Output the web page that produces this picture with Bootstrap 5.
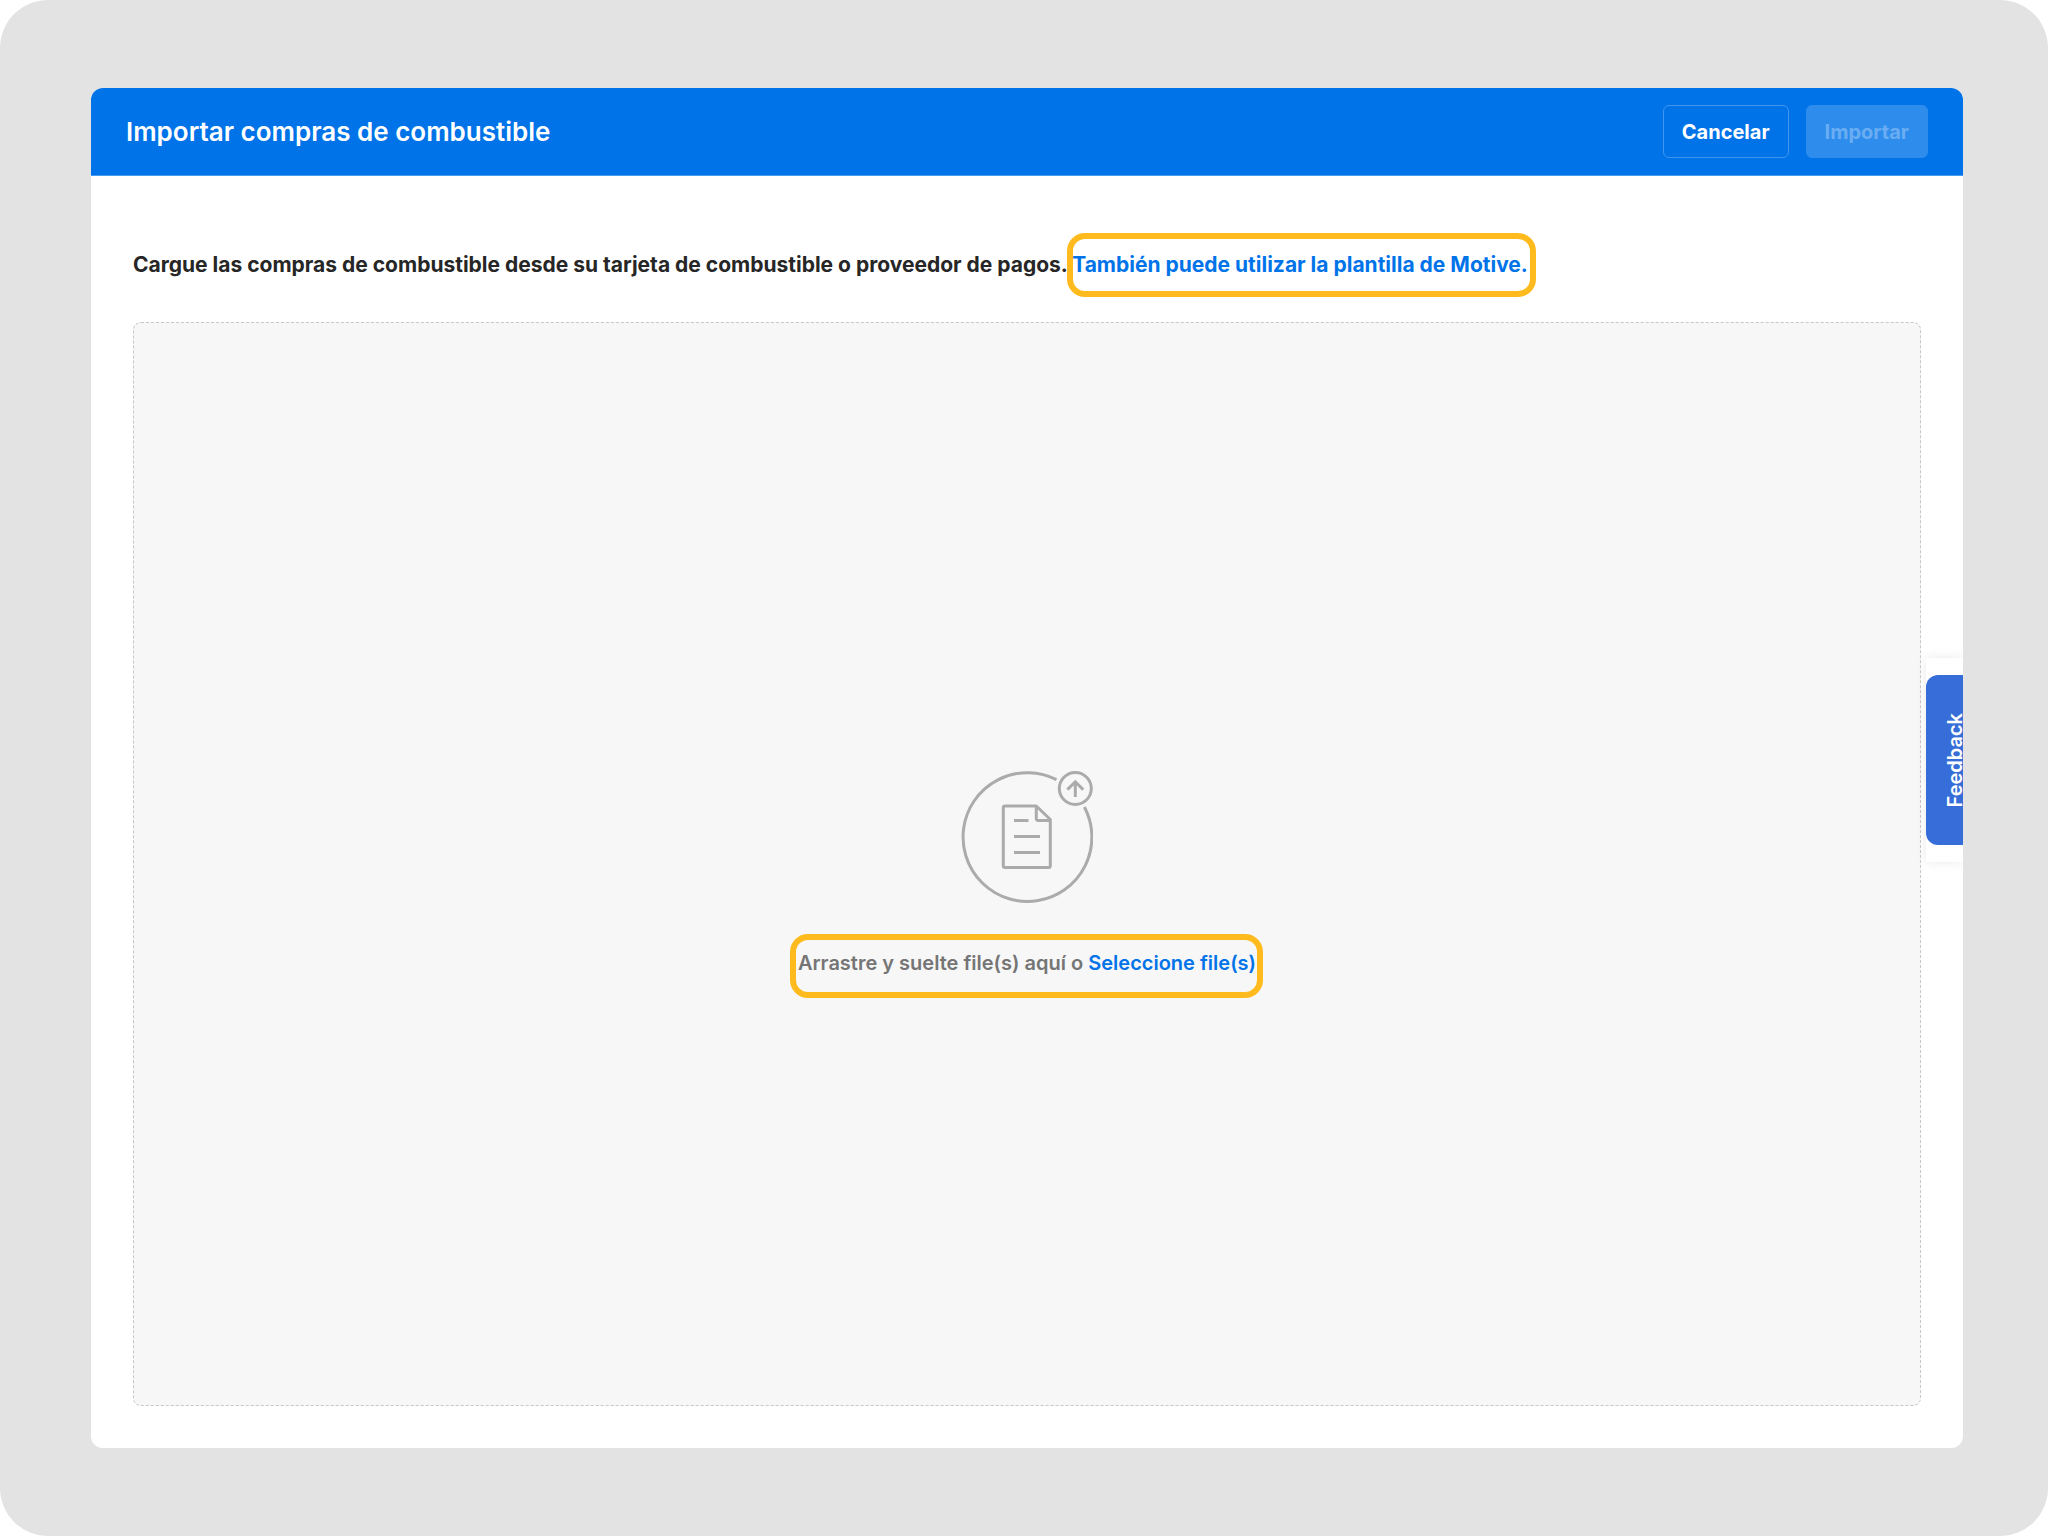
<!DOCTYPE html>
<html lang="es">
<head>
<meta charset="utf-8">
<meta name="viewport" content="width=device-width, initial-scale=1">
<title>Importar compras de combustible</title>
<link href="https://cdn.jsdelivr.net/npm/bootstrap@5.3.0/dist/css/bootstrap.min.css" rel="stylesheet">
<style>
body { font-family: Inter, "Liberation Sans", sans-serif; background: #fff; color: #262626; }
.stage { background: #e3e3e3; border-radius: 48px; padding: 88px 85px 88px 91px; }
.panel { background: #fff; border-radius: 12px; }
.topbar { background: #0073e9; min-height: 88px; padding: 16px 35px; border-bottom: 1px solid #4a9bef; }
.topbar h1 { font-size: 26px; line-height: 32px; font-weight: 600; }
.topbar-actions { gap: 17px; }
.topbar .btn { font-size: 20px; line-height: 26px; font-weight: 700; padding: 13px 18px 12px; border-radius: 6px; color: #fff; border: 1px solid #4096ef; }
.topbar .btn:disabled { background: #2e8dec; border-color: #2e8dec; color: #6aadf2; opacity: 1; }
.import-body { padding: 75px 42px 42px; }
.intro { font-size: 21px; line-height: 28px; font-weight: 700; margin-bottom: 43px; }
.dropzone { background: #f7f7f7; border: 1px dashed #c8c8c8; border-radius: 8px; padding-top: 20px; gap: 45px; }
.prompt { font-size: 20px; line-height: 30px; font-weight: 600; color: #757575; }
.action { color: #0073e9; text-decoration: none; }
.upload-icon { width: 132px; height: 132px; }
.spot::after { content: ""; position: absolute; inset: -18px -8px -18px -5px; border: 6px solid #ffbb1e; border-radius: 18px; pointer-events: none; }
.spot-prompt::after { inset: -14px -7px -20px -8px; }
.feedback-tab { top: 570px; right: 0; width: 37px; padding: 17px 0; background: #fff; box-shadow: 0 0 10px rgba(0,0,0,.09); }
.feedback-tab button { width: 58px; height: 170px; padding: 6px 0 0; background: #366dd8; color: #fff; border: 0; border-radius: 12px 0 0 12px; font-size: 20px; line-height: 24px; font-weight: 600; }
.feedback-tab span { writing-mode: vertical-rl; transform: rotate(180deg); }
</style>
</head>
<body>
<div class="stage min-vh-100 d-flex flex-column">
  <main class="panel position-relative flex-grow-1 d-flex flex-column overflow-hidden">
    <header class="topbar d-flex align-items-center justify-content-between">
      <h1 class="m-0 text-white">Importar compras de combustible</h1>
      <div class="topbar-actions d-flex">
        <button type="button" class="btn">Cancelar</button>
        <button type="button" class="btn" disabled>Importar</button>
      </div>
    </header>
    <div class="import-body flex-grow-1 d-flex flex-column">
      <p class="intro">Cargue las compras de combustible desde su tarjeta de combustible o proveedor de pagos. <a href="#" class="action spot d-inline-block position-relative">También puede utilizar la plantilla de Motive.</a></p>
      <section class="dropzone flex-grow-1 d-flex flex-column align-items-center justify-content-center">
        <svg class="upload-icon" viewBox="0 0 132 132" fill="none" stroke="#ababab" stroke-width="3" aria-hidden="true">
          <path d="M95.5 8.6A64.4 64.4 0 1 0 123.4 36"/>
          <circle cx="114.3" cy="17.5" r="16"/>
          <path d="M114.3 26V11M106.4 18.6l7.9-7.8 7.9 7.8"/>
          <path d="M75.5 35H44a1.7 1.7 0 0 0-1.7 1.7v58a1.7 1.7 0 0 0 1.7 1.7h43.6a1.7 1.7 0 0 0 1.7-1.7V48.5L75.3 35v12.7a1.7 1.7 0 0 0 1.7 1.7H89" stroke-linejoin="round"/>
          <path d="M53 49.5h14.5M53 65.5h26M53 81.5h26"/>
        </svg>
        <p class="prompt spot spot-prompt position-relative m-0">Arrastre y suelte file(s) aquí o <a href="#" class="action">Seleccione file(s)</a></p>
      </section>
    </div>
    <aside class="feedback-tab position-absolute">
      <button type="button"><span>Feedback</span></button>
    </aside>
  </main>
</div>
<script src="https://cdn.jsdelivr.net/npm/bootstrap@5.3.0/dist/js/bootstrap.bundle.min.js"></script>
</body>
</html>
